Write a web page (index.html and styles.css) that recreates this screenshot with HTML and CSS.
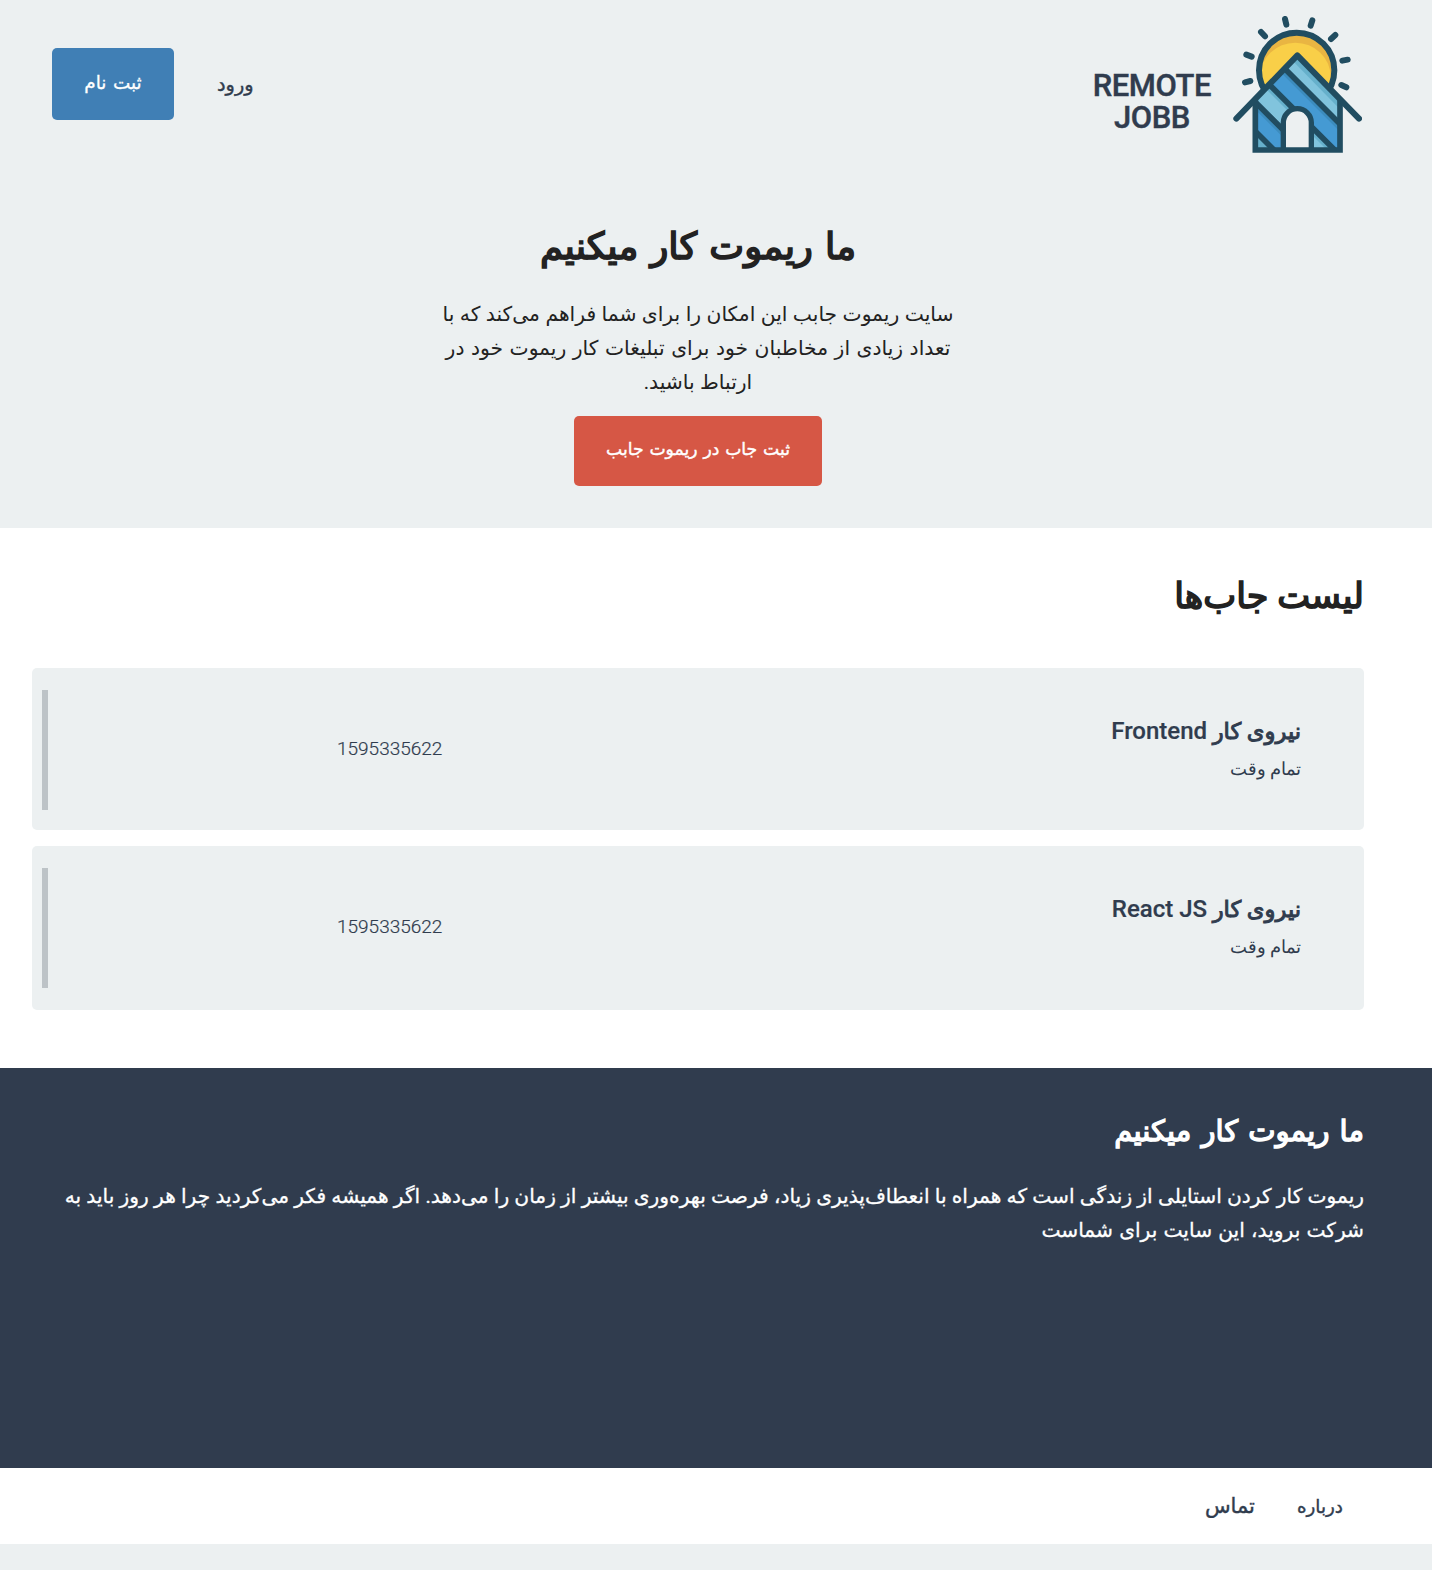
FILE: index.html
```html
<!DOCTYPE html>
<html lang="fa" dir="rtl">
<head>
<meta charset="utf-8">
<title>Remote Jobb</title>
<link rel="stylesheet" href="styles.css">
</head>
<body>
<header class="header">
  <a class="brand">
    <svg class="logo" viewBox="36 47 390 411" aria-hidden="true">
      <defs><clipPath id="house"><path d="M232 173 360 305V449H106V305Z"/></clipPath>
      <clipPath id="sky"><path d="M0 0H480V405L232 165 0 405Z"/></clipPath></defs>
      <g clip-path="url(#sky)">
        <circle cx="230" cy="210" r="112" fill="#e9b542"/>
        <ellipse cx="226" cy="230" rx="106" ry="103" fill="#f9cf48"/>
        <circle cx="230" cy="210" r="113" fill="none" stroke="#214d61" stroke-width="18"/>
      </g>
      <g clip-path="url(#house)">
        <path fill="#459ad3" d="M90 150H380V460H90Z"/>
        <path fill="#81c4dd" d="M189 200 232 150 380 300V391Z"/>
        <path fill="#66b0cb" d="M215 178 232 160 380 308V347Z"/>
        <path fill="#3c8cbd" d="M189 200 380 391V414L172 206Z"/>
        <path fill="#81c4dd" d="M90 195 355 460H261L90 289Z"/>
        <path fill="#66b0cb" d="M90 195 355 460H332L90 218Z"/>
        <path fill="#3c8cbd" d="M90 289 261 460H238L90 312Z"/>
        <path fill="#66b0cb" d="M90 377 173 460H90Z"/>
        <path fill="none" stroke="#214d61" stroke-width="17" d="M181 192 380 391M130 235 355 460M90 289 261 460M90 377 173 460"/>
      </g>
      <path d="M190 449V367a42 42 0 0 1 84 0V449" fill="#ecf0f1" stroke="#214d61" stroke-width="16"/>
      <path d="M106 300V449H360V300" fill="none" stroke="#214d61" stroke-width="17"/>
      <path d="M49 355 232 165 417 355" fill="none" stroke="#214d61" stroke-width="18" stroke-linecap="round" stroke-linejoin="round"/>
      <path d="M195 56 199 73M277 60 272 76M123 95 135 108M346 104 333 116M79 163 95 169M383 178 367 181M75 246 91 242M364 254 379 261" stroke="#214d61" stroke-width="18" stroke-linecap="round"/>
    </svg>
    <span class="brand-name" dir="ltr"><span>REMOTE</span><span>JOBB</span></span>
  </a>
  <nav class="auth">
    <a class="login">ورود</a>
    <a class="button signup">ثبت نام</a>
  </nav>
</header>
<section class="hero">
  <h1 class="hero-title">ما ریموت کار میکنیم</h1>
  <p class="hero-text">سایت ریموت جابب این امکان را برای شما فراهم می‌کند که با<br><span class="wide">تعداد زیادی از مخاطبان خود برای تبلیغات کار ریموت خود در</span><br>ارتباط باشید.</p>
  <a class="button post">ثبت جاب در ریموت جابب</a>
</section>
<main class="jobs">
  <h2 class="jobs-title">لیست جاب‌ها</h2>
  <article class="job">
    <div><h3 class="job-title"><span class="role">نیروی کار</span> <bdi class="skill">Frontend</bdi></h3><p class="job-type">تمام وقت</p></div>
    <span class="job-date">1595335622</span>
  </article>
  <article class="job last">
    <div><h3 class="job-title"><span class="role">نیروی کار</span> <bdi class="skill">React JS</bdi></h3><p class="job-type">تمام وقت</p></div>
    <span class="job-date">1595335622</span>
  </article>
</main>
<section class="about">
  <h2 class="about-title">ما ریموت کار میکنیم</h2>
  <p class="about-text">ریموت کار کردن استایلی از زندگی است که همراه با انعطاف‌پذیری زیاد، فرصت بهره‌وری بیشتر از زمان را می‌دهد. اگر همیشه فکر می‌کردید چرا هر روز باید به<br><span class="wide">شرکت بروید، این سایت برای شماست</span></p>
</section>
<footer class="footer"><a class="short">درباره</a><a>تماس</a></footer>
</body>
</html>
```
FILE: styles.css
```css
* { box-sizing: border-box; margin: 0; padding: 0; }
body { background: #ecf0f1; color: #222; font-family: Roboto, "DejaVu Sans", sans-serif; }
h1, h2, h3 { font-weight: 400; }
.header { display: flex; justify-content: space-between; align-items: flex-start; height: 168px; padding: 16px 70px 0 52px; }
.brand { display: flex; gap: 21px; color: #303c4e; }
.logo { width: 130px; height: 137px; }
.brand-name { display: flex; flex-direction: column; margin-top: 54px; font-size: 31px; line-height: 32px; font-weight: 500; text-align: center; letter-spacing: -0.5px; -webkit-text-stroke: 0.4px; }
.auth { display: flex; align-items: center; gap: 43px; margin-top: 32px; color: #303c4e; }
.login { font-size: 19.3px; -webkit-text-stroke: 0.4px; }
.button { display: flex; align-items: center; justify-content: center; border-radius: 5px; color: #fff; }
.signup { width: 122px; height: 72px; padding-bottom: 4px; background: #407fb5; font-size: 18.4px; word-spacing: 2px; -webkit-text-stroke: 0.3px; }
.hero { display: flex; flex-direction: column; align-items: center; height: 360px; padding: 49px 68px 0 32px; }
.hero-title { font-size: 37px; line-height: 60px; word-spacing: 3px; -webkit-text-stroke: 1.7px; }
.hero-text { margin-top: 20px; font-size: 20.3px; line-height: 34px; text-align: center; white-space: nowrap; word-spacing: 0.4px; }
.hero-text .wide { word-spacing: 1.5px; }
.post { width: 248px; height: 70px; margin-top: 17px; padding-bottom: 4px; background: #d65745; font-size: 17.2px; word-spacing: 1.6px; -webkit-text-stroke: 0.4px; }
.jobs { height: 540px; padding: 39px 68px 0 32px; background: #fff; }
.jobs-title { font-size: 35px; line-height: 60px; -webkit-text-stroke: 1.6px; }
.job { display: flex; justify-content: space-between; align-items: center; height: 162px; padding: 0 63px 0 305px; margin-top: 41px; background: #ecf0f1; border-radius: 5px; color: #303c4e; position: relative; }
.job::after { content: ""; position: absolute; left: 10px; top: 22px; width: 6px; height: 120px; background: #bdc3c7; }
.job.last { height: 164px; margin-top: 16px; padding-bottom: 2px; }
.job-title { padding-top: 3px; font-size: 22.6px; line-height: 36px; }
.role { -webkit-text-stroke: 1px; }
.skill { font-size: 24px; font-weight: 500; -webkit-text-stroke: 0.2px; }
.job-type { font-size: 18.2px; line-height: 38px; font-weight: 300; }
.job-date { padding-bottom: 2px; font-size: 19px; font-weight: 300; -webkit-text-stroke: 0.2px; }
.about { height: 400px; padding: 33px 68px 0 32px; background: #303c4e; color: #fff; }
.about-title { font-size: 29px; line-height: 60px; word-spacing: 3px; -webkit-text-stroke: 1.4px; }
.about-text { margin-top: 18px; font-size: 20.2px; line-height: 34px; white-space: nowrap; word-spacing: 0.2px; -webkit-text-stroke: 0.3px; }
.about-text .wide { word-spacing: 1.2px; }
.footer { display: flex; gap: 42px; height: 76px; padding: 0 89px; align-items: center; background: #fff; color: #303c4e; font-size: 21px; -webkit-text-stroke: 0.4px; }
.footer .short { font-size: 18.3px; }
```
